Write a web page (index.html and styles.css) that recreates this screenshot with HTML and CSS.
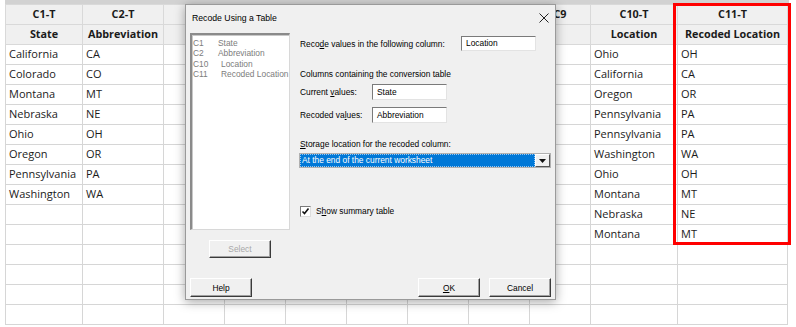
FILE: index.html
```html
<!DOCTYPE html>
<html lang="en">
  <head>
    <meta charset="utf-8" />
    <title>Recode Using a Table</title>
    <link rel="stylesheet" href="styles.css">
  </head>
  <body>
    <div class="topstrip"></div>
    <table class="sheet">
      <colgroup>
        <col class="w-c1"><col class="w-c2">
        <col class="w-num"><col class="w-num"><col class="w-num"><col class="w-num">
        <col class="w-num"><col class="w-num"><col class="w-num">
        <col class="w-c10"><col class="w-c11">
      </colgroup>
      <!-- C3..C8 headers sit under the dialog -->
      <tr class="head">
        <td>C1-T</td><td>C2-T</td><td></td><td></td><td></td><td></td><td></td><td></td><td>C9</td><td>C10-T</td><td>C11-T</td>
      </tr>
      <tr class="head">
        <td>State</td><td>Abbreviation</td><td></td><td></td><td></td><td></td><td></td><td></td><td></td><td>Location</td><td>Recoded Location</td>
      </tr>
      <tr><td>California</td><td>CA</td><td></td><td></td><td></td><td></td><td></td><td></td><td></td><td>Ohio</td><td>OH</td></tr>
      <tr><td>Colorado</td><td>CO</td><td></td><td></td><td></td><td></td><td></td><td></td><td></td><td>California</td><td>CA</td></tr>
      <tr><td>Montana</td><td>MT</td><td></td><td></td><td></td><td></td><td></td><td></td><td></td><td>Oregon</td><td>OR</td></tr>
      <tr><td>Nebraska</td><td>NE</td><td></td><td></td><td></td><td></td><td></td><td></td><td></td><td>Pennsylvania</td><td>PA</td></tr>
      <tr><td>Ohio</td><td>OH</td><td></td><td></td><td></td><td></td><td></td><td></td><td></td><td>Pennsylvania</td><td>PA</td></tr>
      <tr><td>Oregon</td><td>OR</td><td></td><td></td><td></td><td></td><td></td><td></td><td></td><td>Washington</td><td>WA</td></tr>
      <tr><td>Pennsylvania</td><td>PA</td><td></td><td></td><td></td><td></td><td></td><td></td><td></td><td>Ohio</td><td>OH</td></tr>
      <tr><td>Washington</td><td>WA</td><td></td><td></td><td></td><td></td><td></td><td></td><td></td><td>Montana</td><td>MT</td></tr>
      <tr><td></td><td></td><td></td><td></td><td></td><td></td><td></td><td></td><td></td><td>Nebraska</td><td>NE</td></tr>
      <tr><td></td><td></td><td></td><td></td><td></td><td></td><td></td><td></td><td></td><td>Montana</td><td>MT</td></tr>
      <tr><td></td><td></td><td></td><td></td><td></td><td></td><td></td><td></td><td></td><td></td><td></td></tr>
      <tr><td></td><td></td><td></td><td></td><td></td><td></td><td></td><td></td><td></td><td></td><td></td></tr>
      <tr><td></td><td></td><td></td><td></td><td></td><td></td><td></td><td></td><td></td><td></td><td></td></tr>
      <tr><td></td><td></td><td></td><td></td><td></td><td></td><td></td><td></td><td></td><td></td><td></td></tr>
    </table>

    <!-- highlight around the recoded column -->
    <div class="highlight"></div>

    <div class="dialog">
      <div class="titlebar">
        <span class="title">Recode Using a Table</span>
        <svg class="close" width="10" height="10" viewBox="0 0 10 10">
          <path d="M0.5 0.5 L9.5 9.5 M9.5 0.5 L0.5 9.5" stroke="#222" stroke-width="1" fill="none" />
        </svg>
      </div>

      <div class="dlg-main">
        <div class="dlg-left">
          <div class="listbox">
            <div class="item"><span class="cn">C1</span>State</div>
            <div class="item"><span class="cn">C2</span>Abbreviation</div>
            <div class="item"><span class="cn long">C10</span>Location</div>
            <div class="item"><span class="cn long">C11</span>Recoded Location</div>
          </div>
          <button class="btn btn-select" disabled>Select</button>
        </div>

        <div class="dlg-right">
          <div class="field-row row-first">
            <span class="label">Reco<u>d</u>e values in the following column:</span>
            <span class="input input-wide">Location</span>
          </div>
          <div class="section-label sec-columns">Columns containing the conversion table</div>
          <div class="field-row row-current">
            <span class="label label-short">Current <u>v</u>alues:</span>
            <span class="input">State</span>
          </div>
          <div class="field-row row-recoded">
            <span class="label label-short">Recoded va<u>l</u>ues:</span>
            <span class="input">Abbreviation</span>
          </div>
          <div class="section-label sec-storage"><u>S</u>torage location for the recoded column:</div>
          <div class="combo">
            <span class="combo-value">At the end of the current worksheet</span>
            <span class="combo-btn">
              <svg width="7" height="4" viewBox="0 0 7 4"><path d="M0 0 H7 L3.5 4 Z" fill="#111" /></svg>
            </span>
          </div>
          <div class="check">
            <span class="box">
              <svg width="9" height="9" viewBox="0 0 9 9"><path d="M1.5 4.5 L3.5 6.5 L7.5 1.5" stroke="#111" stroke-width="1.6" fill="none" /></svg>
            </span>
            S<u>h</u>ow summary table
          </div>
        </div>
      </div>

      <div class="dlg-footer">
        <button class="btn">Help</button>
        <span class="spacer"></span>
        <button class="btn"><u>O</u>K</button>
        <button class="btn">Cancel</button>
      </div>
    </div>
  </body>
</html>
```
FILE: styles.css
```css
html {
  box-sizing: border-box;
}

* {
  box-sizing: inherit;
}

body {
  margin: 0;
  background: #fff;
  font-family: "Open Sans", "Noto Sans", sans-serif;
  color: #1b1b1b;
  position: relative;
  width: 796px;
  height: 327px;
  overflow: hidden;
}

.topstrip {
  height: 4px;
  margin-left: 5px;
  width: 784px;
  background: #d2d2d2;
}

/* worksheet */

.sheet {
  margin-left: 5px;
  border-collapse: collapse;
  table-layout: fixed;
  width: 783px;
  font-size: 11px;
}

.w-c1 { width: 77px; }
.w-c2 { width: 81px; }
.w-num { width: 61px; }
.w-c10 { width: 87px; }
.w-c11 { width: 110px; }

.sheet td {
  height: 20px;
  padding: 0 3px 2px 3px;
  border: 1px solid #d6d6d6;
  white-space: nowrap;
  overflow: hidden;
  line-height: 17px;
}

.sheet .head td {
  background: #f0f0f0;
  font-weight: 700;
  text-align: center;
  border-color: #d9d9d9;
  font-size: 10.8px;
}

.highlight {
  position: absolute;
  left: 673px;
  top: 3px;
  width: 118px;
  height: 242px;
  border: 3px solid #f00;
}

/* dialog window */

.dialog {
  position: absolute;
  left: 185px;
  top: 4px;
  width: 371px;
  height: 296px;
  background: #f0f0f0;
  border: 1px solid #9a9a9a;
  box-shadow: 0 2px 10px rgba(0, 0, 0, 0.35);
  display: flex;
  flex-direction: column;
  font-family: "Liberation Sans", Arial, sans-serif;
  font-size: 8.4px;
  color: #000;
}

.titlebar {
  height: 28px;
  display: flex;
  align-items: center;
  padding: 0 6px 0 6px;
}

.title {
  flex-grow: 1;
  font-size: 8.7px;
  margin-top: -2px;
}

.close {
  margin-top: -2px;
}

.dlg-main {
  display: flex;
  padding-left: 4px;
}

.dlg-left {
  width: 100px;
  display: flex;
  flex-direction: column;
}

.listbox {
  height: 197px;
  background: #fff;
  border-top: 2px solid #8a8a8a;
  border-left: 2px solid #8a8a8a;
  border-right: 1px solid #d8d8d8;
  border-bottom: 1px solid #d8d8d8;
  box-shadow: inset 1px 1px 0 #c8c8c8;
  padding: 3px 0 0 1px;
  color: #7c7c7c;
}

.item {
  height: 10.4px;
  line-height: 10.4px;
  white-space: nowrap;
}

.cn {
  display: inline-block;
  width: 25px;
}

.cn.long {
  width: 28px;
}

.btn {
  font: inherit;
  color: #000;
  width: 62px;
  height: 19px;
  padding: 0;
  background: #f0f0f0;
  border-top: 1px solid #fff;
  border-left: 1px solid #fff;
  border-right: 1px solid #3a3a3a;
  border-bottom: 1px solid #3a3a3a;
  box-shadow: inset -1px -1px 0 #a0a0a0;
}

.btn-select {
  margin: 10px 0 0 19px;
  height: 18px;
  color: #a8a8a8;
}

.dlg-right {
  margin-left: 10px;
  width: 251px;
}

.field-row {
  display: flex;
  align-items: center;
}

.label {
  white-space: nowrap;
}

.row-first { margin-top: 3px; }
.row-current { margin-top: 4px; }
.row-recoded { margin-top: 7px; }

.label-short {
  width: 72px;
}

.input {
  display: block;
  height: 16px;
  width: 75px;
  background: #fff;
  border-top: 1px solid #7a7a7a;
  border-left: 1px solid #7a7a7a;
  border-right: 1px solid #e3e3e3;
  border-bottom: 1px solid #e3e3e3;
  padding: 0 4px;
  line-height: 14px;
}

.input-wide {
  margin-left: auto;
  margin-right: 15px;
  height: 15px;
  line-height: 13px;
}

.section-label {
  line-height: 12px;
}

.sec-columns { margin-top: 17px; }
.sec-storage { margin-top: 15px; }

.combo {
  margin: 3px 0 0 -1px;
  display: flex;
  height: 15px;
  border: 1px solid #b0b0b0;
  background: #fff;
}

.combo-value {
  flex-grow: 1;
  background: #0078d7;
  color: #fff;
  line-height: 13px;
  padding-left: 2px;
  outline: 1px dotted #9cc8f0;
  outline-offset: -1px;
}

.combo-btn {
  width: 15px;
  display: flex;
  align-items: center;
  justify-content: center;
  background: #f0f0f0;
  border-left: 1px solid #fff;
  border-top: 1px solid #fff;
  border-right: 1px solid #555;
  border-bottom: 1px solid #555;
}

.check {
  margin-top: 37px;
  display: flex;
  align-items: center;
  line-height: 12px;
}

.box {
  width: 11px;
  height: 11px;
  margin-right: 5px;
  background: #fff;
  border-top: 1px solid #7a7a7a;
  border-left: 1px solid #7a7a7a;
  border-right: 1px solid #ddd;
  border-bottom: 1px solid #ddd;
  display: flex;
  align-items: center;
  justify-content: center;
}

.dlg-footer {
  margin-top: auto;
  display: flex;
  gap: 9px;
  padding: 0 4px 2px 4px;
}

.spacer {
  flex-grow: 1;
}
```
